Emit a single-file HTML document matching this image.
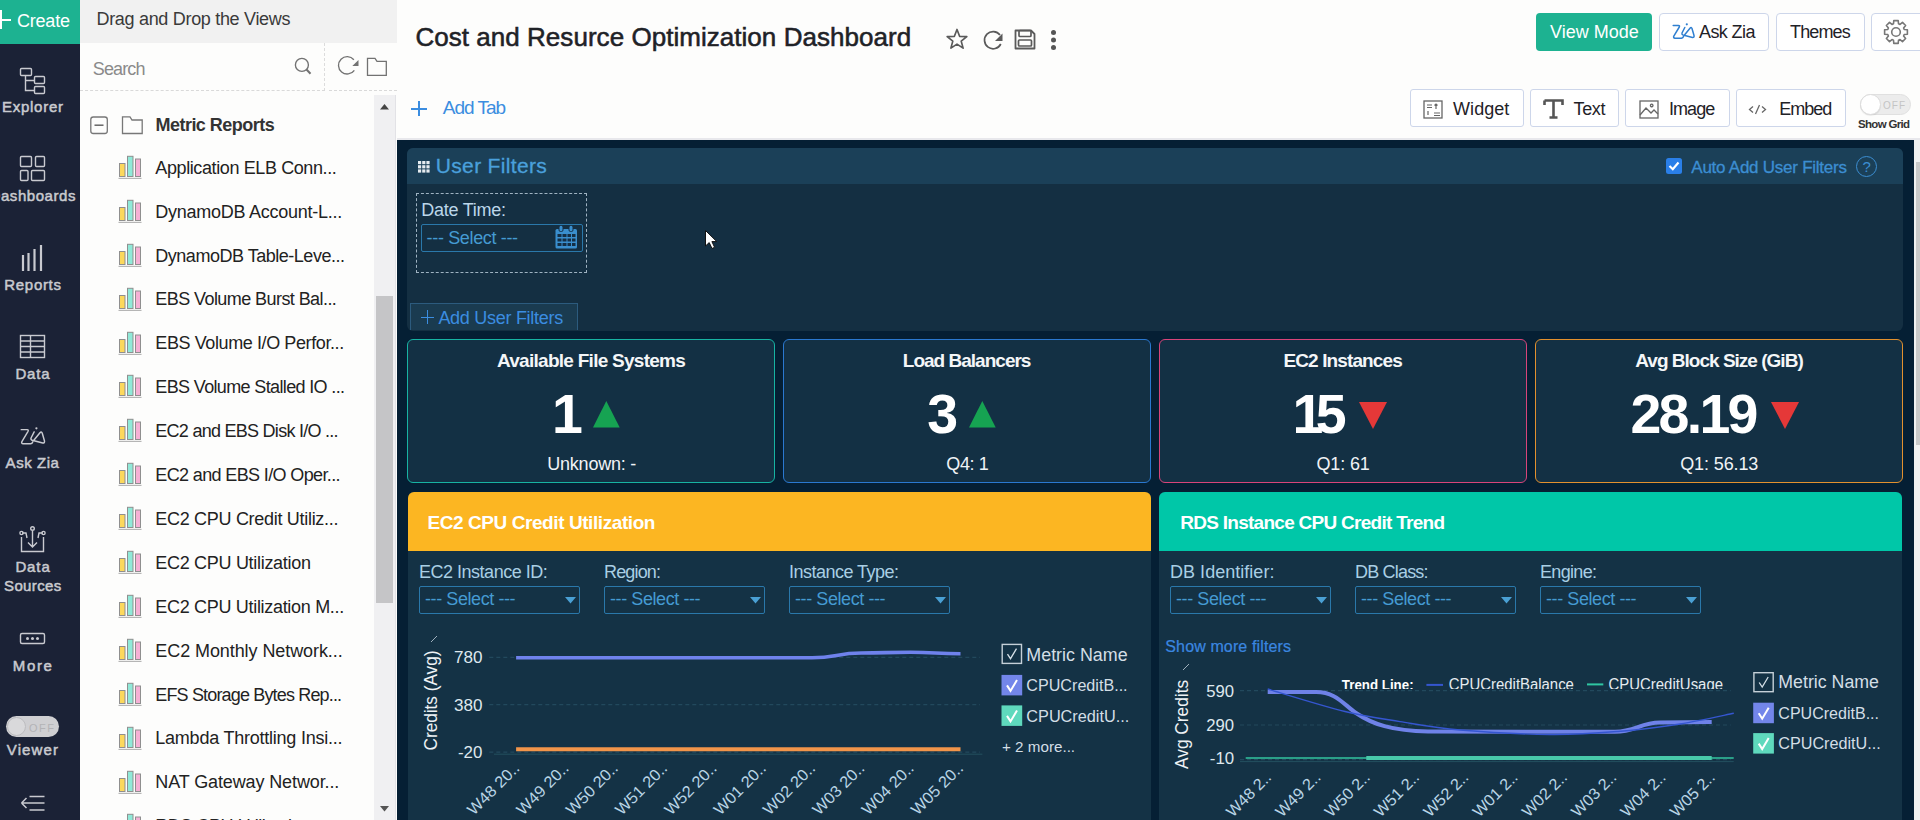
<!DOCTYPE html>
<html><head><meta charset="utf-8"><title>Dashboard</title>
<style>
*{box-sizing:border-box;margin:0;padding:0}
html,body{width:1920px;height:820px;overflow:hidden;background:#fdfdfc;font-family:"Liberation Sans",sans-serif;position:relative}
.a{position:absolute}
.t{white-space:pre}
svg{overflow:visible}
</style></head><body>
<div class="a" style="left:0;top:0;width:80px;height:820px;background:#1b2236"></div>
<div class="a" style="left:0;top:0;width:80px;height:44px;background:#1db291"></div>
<div class="a" style="left:0;top:10px;width:2px;height:19px;background:#fff"></div>
<div class="a" style="left:-4px;top:19px;width:15px;height:2px;background:#fff"></div>
<svg class="a" style="left:0;top:0" width="80" height="820" fill="none" stroke="#c9cad0" stroke-width="1.4">
<rect x="20.5" y="68.5" width="11" height="7" rx="1"/>
<rect x="34.5" y="76.5" width="10" height="7" rx="1"/>
<rect x="34.5" y="86.5" width="10" height="7" rx="1"/>
<path d="M25.5 75.5V90.5H34.5M25.5 80.5H34.5"/>
<rect x="20.5" y="156.5" width="11" height="10" rx="1"/>
<rect x="35.5" y="156.5" width="9" height="10" rx="1"/>
<rect x="20.5" y="170.5" width="7.5" height="10" rx="1"/>
<rect x="31.5" y="170.5" width="13" height="10" rx="1"/>
<path d="M23 271V255M28.5 271V253M34.5 271V249M41 271V245" stroke-width="2.2"/>
<rect x="20.5" y="335.5" width="24" height="22"/>
<path d="M20.5 341H44.5M20.5 346.5H44.5M20.5 352H44.5M30.5 335.5V357.5"/>
<g transform="translate(17.65 423.5) scale(1.116)"><path d="M3.2 5.5H8.5Q10 5.5 9.3 7L3.8 16.2Q3 17.8 5 18.2H11.5Q13 18 13.5 16.5M14.8 7.5L12 13Q11.5 14.5 13 15L22.5 17.5Q24.5 17.5 24 15.5L22 8.5Q21.2 6.8 20 8.3L14.5 15" stroke-linecap="round" stroke-linejoin="round" stroke-width="1.3"/><circle cx="16.8" cy="4.3" r="1" fill="#c9cad0" stroke="none"/></g>
<path d="M21.5 537V551.5H43.5V537M32.5 531V547M28 542.5L32.5 547L37 542.5M22 533H26L27 538M43 533H39L38 538"/>
<circle cx="32.5" cy="528.5" r="1.8"/><circle cx="21.5" cy="533" r="1.6"/><circle cx="43.5" cy="533" r="1.6"/>
<rect x="20.5" y="633.5" width="24" height="10" rx="1.5"/>
<path d="M21.5 803H44.5M29.5 796.5H44.5M29.5 810H44.5M21.5 803L26.5 798M21.5 803L26.5 808" stroke-width="1.5"/>
</svg>
<div class="a" style="left:26px;top:637px;width:3px;height:3px;background:#c9cad0;border-radius:50%;box-shadow:5px 0 0 #c9cad0,10px 0 0 #c9cad0"></div>
<div class="a" style="left:6px;top:716px;width:53px;height:21px;border-radius:11px;background:#cfcfd2"></div>
<div class="a" style="left:7px;top:717px;width:19px;height:19px;border-radius:50%;background:#d9d9db;border:1px solid #bdbdc0"></div>
<div class="a" style="left:80px;top:0;width:317px;height:820px;background:#fdfdfc"></div>
<div class="a" style="left:80px;top:0;width:317px;height:43px;background:#f1f1f1"></div>
<div class="a" style="left:324px;top:43px;width:0;height:48px;border-left:1px dashed #dcdcdc"></div>
<div class="a" style="left:80px;top:90px;width:245px;height:0;border-top:1px dashed #d9d9d9"></div>
<div class="a" style="left:329px;top:90px;width:68px;height:0;border-top:1px dashed #d9d9d9"></div>
<svg class="a" style="left:80px;top:0" width="317" height="820" fill="none" stroke="#727272" stroke-width="1.35">
<circle cx="221.9" cy="64.9" r="6.5"/><path d="M226.5 69.5L230.5 73.8" stroke-width="2"/>
<path d="M273.86 59.71A8.7 8.7 0 1 0 274.33 70.29"/><path d="M278.5 60L278.5 66L272.3 66Z" fill="#727272" stroke="none"/>
<path d="M287.5 75.3V58.3H295L297 61.3H306.3V75.3Z" stroke-width="1.3"/>
<rect x="10.8" y="117" width="16.5" height="16.5" rx="2.5" stroke="#777" stroke-width="1.3"/>
<path d="M14.5 125.2H23.5" stroke="#666" stroke-width="1.5"/>
<path d="M42.5 133.5V116.8H50L52 120H62.2V133.5Z" stroke="#777" stroke-width="1.3"/>
</svg>
<svg class="a" style="left:117px;top:153.9px" width="26" height="26">
<rect x="2.5" y="9.5" width="5.5" height="13" fill="#fcd85c" stroke="#8f8f8f" stroke-width="1"/>
<rect x="10.5" y="2.3" width="5.5" height="20.2" fill="#90e9d8" stroke="#8f8f8f" stroke-width="1"/>
<rect x="18.5" y="5" width="5" height="17.5" fill="#f6b0d5" stroke="#8f8f8f" stroke-width="1"/>
<path d="M1.5 24.4H24.5" stroke="#b5b5b5" stroke-width="1.2"/></svg>
<svg class="a" style="left:117px;top:197.8px" width="26" height="26">
<rect x="2.5" y="9.5" width="5.5" height="13" fill="#fcd85c" stroke="#8f8f8f" stroke-width="1"/>
<rect x="10.5" y="2.3" width="5.5" height="20.2" fill="#90e9d8" stroke="#8f8f8f" stroke-width="1"/>
<rect x="18.5" y="5" width="5" height="17.5" fill="#f6b0d5" stroke="#8f8f8f" stroke-width="1"/>
<path d="M1.5 24.4H24.5" stroke="#b5b5b5" stroke-width="1.2"/></svg>
<svg class="a" style="left:117px;top:241.7px" width="26" height="26">
<rect x="2.5" y="9.5" width="5.5" height="13" fill="#fcd85c" stroke="#8f8f8f" stroke-width="1"/>
<rect x="10.5" y="2.3" width="5.5" height="20.2" fill="#90e9d8" stroke="#8f8f8f" stroke-width="1"/>
<rect x="18.5" y="5" width="5" height="17.5" fill="#f6b0d5" stroke="#8f8f8f" stroke-width="1"/>
<path d="M1.5 24.4H24.5" stroke="#b5b5b5" stroke-width="1.2"/></svg>
<svg class="a" style="left:117px;top:285.6px" width="26" height="26">
<rect x="2.5" y="9.5" width="5.5" height="13" fill="#fcd85c" stroke="#8f8f8f" stroke-width="1"/>
<rect x="10.5" y="2.3" width="5.5" height="20.2" fill="#90e9d8" stroke="#8f8f8f" stroke-width="1"/>
<rect x="18.5" y="5" width="5" height="17.5" fill="#f6b0d5" stroke="#8f8f8f" stroke-width="1"/>
<path d="M1.5 24.4H24.5" stroke="#b5b5b5" stroke-width="1.2"/></svg>
<svg class="a" style="left:117px;top:329.5px" width="26" height="26">
<rect x="2.5" y="9.5" width="5.5" height="13" fill="#fcd85c" stroke="#8f8f8f" stroke-width="1"/>
<rect x="10.5" y="2.3" width="5.5" height="20.2" fill="#90e9d8" stroke="#8f8f8f" stroke-width="1"/>
<rect x="18.5" y="5" width="5" height="17.5" fill="#f6b0d5" stroke="#8f8f8f" stroke-width="1"/>
<path d="M1.5 24.4H24.5" stroke="#b5b5b5" stroke-width="1.2"/></svg>
<svg class="a" style="left:117px;top:373.4px" width="26" height="26">
<rect x="2.5" y="9.5" width="5.5" height="13" fill="#fcd85c" stroke="#8f8f8f" stroke-width="1"/>
<rect x="10.5" y="2.3" width="5.5" height="20.2" fill="#90e9d8" stroke="#8f8f8f" stroke-width="1"/>
<rect x="18.5" y="5" width="5" height="17.5" fill="#f6b0d5" stroke="#8f8f8f" stroke-width="1"/>
<path d="M1.5 24.4H24.5" stroke="#b5b5b5" stroke-width="1.2"/></svg>
<svg class="a" style="left:117px;top:417.3px" width="26" height="26">
<rect x="2.5" y="9.5" width="5.5" height="13" fill="#fcd85c" stroke="#8f8f8f" stroke-width="1"/>
<rect x="10.5" y="2.3" width="5.5" height="20.2" fill="#90e9d8" stroke="#8f8f8f" stroke-width="1"/>
<rect x="18.5" y="5" width="5" height="17.5" fill="#f6b0d5" stroke="#8f8f8f" stroke-width="1"/>
<path d="M1.5 24.4H24.5" stroke="#b5b5b5" stroke-width="1.2"/></svg>
<svg class="a" style="left:117px;top:461.2px" width="26" height="26">
<rect x="2.5" y="9.5" width="5.5" height="13" fill="#fcd85c" stroke="#8f8f8f" stroke-width="1"/>
<rect x="10.5" y="2.3" width="5.5" height="20.2" fill="#90e9d8" stroke="#8f8f8f" stroke-width="1"/>
<rect x="18.5" y="5" width="5" height="17.5" fill="#f6b0d5" stroke="#8f8f8f" stroke-width="1"/>
<path d="M1.5 24.4H24.5" stroke="#b5b5b5" stroke-width="1.2"/></svg>
<svg class="a" style="left:117px;top:505.1px" width="26" height="26">
<rect x="2.5" y="9.5" width="5.5" height="13" fill="#fcd85c" stroke="#8f8f8f" stroke-width="1"/>
<rect x="10.5" y="2.3" width="5.5" height="20.2" fill="#90e9d8" stroke="#8f8f8f" stroke-width="1"/>
<rect x="18.5" y="5" width="5" height="17.5" fill="#f6b0d5" stroke="#8f8f8f" stroke-width="1"/>
<path d="M1.5 24.4H24.5" stroke="#b5b5b5" stroke-width="1.2"/></svg>
<svg class="a" style="left:117px;top:549.0px" width="26" height="26">
<rect x="2.5" y="9.5" width="5.5" height="13" fill="#fcd85c" stroke="#8f8f8f" stroke-width="1"/>
<rect x="10.5" y="2.3" width="5.5" height="20.2" fill="#90e9d8" stroke="#8f8f8f" stroke-width="1"/>
<rect x="18.5" y="5" width="5" height="17.5" fill="#f6b0d5" stroke="#8f8f8f" stroke-width="1"/>
<path d="M1.5 24.4H24.5" stroke="#b5b5b5" stroke-width="1.2"/></svg>
<svg class="a" style="left:117px;top:592.9px" width="26" height="26">
<rect x="2.5" y="9.5" width="5.5" height="13" fill="#fcd85c" stroke="#8f8f8f" stroke-width="1"/>
<rect x="10.5" y="2.3" width="5.5" height="20.2" fill="#90e9d8" stroke="#8f8f8f" stroke-width="1"/>
<rect x="18.5" y="5" width="5" height="17.5" fill="#f6b0d5" stroke="#8f8f8f" stroke-width="1"/>
<path d="M1.5 24.4H24.5" stroke="#b5b5b5" stroke-width="1.2"/></svg>
<svg class="a" style="left:117px;top:636.8px" width="26" height="26">
<rect x="2.5" y="9.5" width="5.5" height="13" fill="#fcd85c" stroke="#8f8f8f" stroke-width="1"/>
<rect x="10.5" y="2.3" width="5.5" height="20.2" fill="#90e9d8" stroke="#8f8f8f" stroke-width="1"/>
<rect x="18.5" y="5" width="5" height="17.5" fill="#f6b0d5" stroke="#8f8f8f" stroke-width="1"/>
<path d="M1.5 24.4H24.5" stroke="#b5b5b5" stroke-width="1.2"/></svg>
<svg class="a" style="left:117px;top:680.7px" width="26" height="26">
<rect x="2.5" y="9.5" width="5.5" height="13" fill="#fcd85c" stroke="#8f8f8f" stroke-width="1"/>
<rect x="10.5" y="2.3" width="5.5" height="20.2" fill="#90e9d8" stroke="#8f8f8f" stroke-width="1"/>
<rect x="18.5" y="5" width="5" height="17.5" fill="#f6b0d5" stroke="#8f8f8f" stroke-width="1"/>
<path d="M1.5 24.4H24.5" stroke="#b5b5b5" stroke-width="1.2"/></svg>
<svg class="a" style="left:117px;top:724.6px" width="26" height="26">
<rect x="2.5" y="9.5" width="5.5" height="13" fill="#fcd85c" stroke="#8f8f8f" stroke-width="1"/>
<rect x="10.5" y="2.3" width="5.5" height="20.2" fill="#90e9d8" stroke="#8f8f8f" stroke-width="1"/>
<rect x="18.5" y="5" width="5" height="17.5" fill="#f6b0d5" stroke="#8f8f8f" stroke-width="1"/>
<path d="M1.5 24.4H24.5" stroke="#b5b5b5" stroke-width="1.2"/></svg>
<svg class="a" style="left:117px;top:768.5px" width="26" height="26">
<rect x="2.5" y="9.5" width="5.5" height="13" fill="#fcd85c" stroke="#8f8f8f" stroke-width="1"/>
<rect x="10.5" y="2.3" width="5.5" height="20.2" fill="#90e9d8" stroke="#8f8f8f" stroke-width="1"/>
<rect x="18.5" y="5" width="5" height="17.5" fill="#f6b0d5" stroke="#8f8f8f" stroke-width="1"/>
<path d="M1.5 24.4H24.5" stroke="#b5b5b5" stroke-width="1.2"/></svg>
<svg class="a" style="left:117px;top:812.4px" width="26" height="26">
<rect x="2.5" y="9.5" width="5.5" height="13" fill="#fcd85c" stroke="#8f8f8f" stroke-width="1"/>
<rect x="10.5" y="2.3" width="5.5" height="20.2" fill="#90e9d8" stroke="#8f8f8f" stroke-width="1"/>
<rect x="18.5" y="5" width="5" height="17.5" fill="#f6b0d5" stroke="#8f8f8f" stroke-width="1"/>
<path d="M1.5 24.4H24.5" stroke="#b5b5b5" stroke-width="1.2"/></svg>
<div class="a" style="left:374px;top:95px;width:22px;height:725px;background:#f0f0f2;border-right:1px solid #e2e2e6"></div>
<div class="a" style="left:376px;top:296px;width:17px;height:307px;background:#c5c5c7"></div>
<svg class="a" style="left:374px;top:95px" width="22" height="725"><path d="M6 14.5L10.5 9L15 14.5Z" fill="#444"/><path d="M6 711L10.5 716.5L15 711Z" fill="#555"/></svg>
<div class="a" style="left:397px;top:0;width:1523px;height:140px;background:#fdfdfc"></div>
<div class="a" style="left:397px;top:138px;width:1523px;height:2px;background:#e8e8ec"></div>
<svg class="a" style="left:940px;top:24px" width="120" height="30" fill="none" stroke="#5a5a5a" stroke-width="1.7" stroke-linejoin="round">
<path d="M17 5.5L19.6 12.3L26.8 12.6L21.2 17.1L23.1 24.1L17 20.1L10.9 24.1L12.8 17.1L7.2 12.6L14.4 12.3Z"/>
<path d="M60 11A8.6 8.6 0 1 0 60.8 20"/><path d="M62.5 9.5V17H55Z" fill="#5a5a5a" stroke="none"/>
<path d="M75.5 6.5H91L94.5 10V24.5H75.5Z" stroke-width="1.8"/>
<rect x="79" y="6.5" width="12" height="6" rx="1"/><rect x="78.5" y="16" width="13" height="6" rx="1"/>
</svg>
<div class="a" style="left:1051px;top:29.5px;width:5px;height:5px;border-radius:50%;background:#555;box-shadow:0 7.5px 0 #555,0 15px 0 #555"></div>
<div class="a" style="left:1536px;top:13px;width:116px;height:38px;border-radius:4px;background:#1db291"></div>
<div class="a" style="left:1659px;top:13px;width:110px;height:38px;border-radius:4px;border:1px solid #cdd6ea;background:#fff"></div>
<div class="a" style="left:1776px;top:13px;width:89px;height:38px;border-radius:4px;border:1px solid #cdd6ea;background:#fff"></div>
<div class="a" style="left:1871px;top:13px;width:64px;height:38px;border-radius:4px;border:1px solid #cdd6ea;background:#fff"></div>
<svg class="a" style="left:1670px;top:20px" width="28" height="22" fill="none" stroke="#2f7fd0" stroke-width="1.5" stroke-linejoin="round">
<path d="M3.2 5.5H8.5Q10 5.5 9.3 7L3.8 16.2Q3 17.8 5 18.2H11.5Q13 18 13.5 16.5M14.8 7.5L12 13Q11.5 14.5 13 15L22.5 17.5Q24.5 17.5 24 15.5L22 8.5Q21.2 6.8 20 8.3L14.5 15" stroke-linecap="round"/><circle cx="16.8" cy="4.3" r="1.1" fill="#2f7fd0" stroke="none"/></svg>
<svg class="a" style="left:1882.3px;top:17.7px" width="28" height="28" fill="none" stroke="#777" stroke-width="1.6" stroke-linejoin="round">
<path d="M22.22 11.49 L25.39 11.79 L25.39 16.21 L22.22 16.51 L21.59 18.04 L23.62 20.49 L20.49 23.62 L18.04 21.59 L16.51 22.22 L16.21 25.39 L11.79 25.39 L11.49 22.22 L9.96 21.59 L7.51 23.62 L4.38 20.49 L6.41 18.04 L5.78 16.51 L2.61 16.21 L2.61 11.79 L5.78 11.49 L6.41 9.96 L4.38 7.51 L7.51 4.38 L9.96 6.41 L11.49 5.78 L11.79 2.61 L16.21 2.61 L16.51 5.78 L18.04 6.41 L20.49 4.38 L23.62 7.51 L21.59 9.96Z"/>
<circle cx="14" cy="14" r="4.3"/></svg>
<div class="a" style="left:417.5px;top:101px;width:2px;height:15px;background:#3b8de0"></div>
<div class="a" style="left:410.5px;top:107.5px;width:16px;height:2px;background:#3b8de0"></div>
<div class="a" style="left:1410px;top:89px;width:114px;height:38px;border-radius:3px;border:1px solid #cdd6ea;background:#fff"></div>
<div class="a" style="left:1530px;top:89px;width:89px;height:38px;border-radius:3px;border:1px solid #cdd6ea;background:#fff"></div>
<div class="a" style="left:1625px;top:89px;width:105px;height:38px;border-radius:3px;border:1px solid #cdd6ea;background:#fff"></div>
<div class="a" style="left:1736px;top:89px;width:110px;height:38px;border-radius:3px;border:1px solid #cdd6ea;background:#fff"></div>
<svg class="a" style="left:1420px;top:96px" width="440" height="26" fill="none" stroke="#666" stroke-width="1.3">
<rect x="4" y="5" width="18" height="17"/><path d="M7 9H12M7 11.5H12M16 8V13M14.5 9.5L16 8L17.5 9.5M8 15V19M14 17H20M14 19.5H20" stroke-width="1.2"/>
<path d="M124.5 4.5H142.5V9M133.5 4.5V21.5M129.5 21.5H137.5M124.5 4.5V9" stroke-width="2.6" stroke="#555"/>
<rect x="220" y="5" width="18" height="17"/><path d="M220 19L226 12L231 17L234 14L238 18M233 9.5A1.3 1.3 0 1 1 233 9.4" stroke-width="1.3"/>
<path d="M333 10.5L329.5 13.5L333 16.5M342 10.5L345.5 13.5L342 16.5M339.5 9L335.5 18" stroke-width="1.3"/>
</svg>
<div class="a" style="left:1859.5px;top:94px;width:51px;height:21px;border-radius:11px;background:#ececec;border:1px solid #e0e0e0"></div>
<div class="a" style="left:1859.5px;top:94px;width:21px;height:21px;border-radius:50%;background:#fff;border:1px solid #dcdcdc;box-shadow:0 1px 1px rgba(0,0,0,.08)"></div>
<div class="a" style="left:397px;top:140px;width:1517px;height:680px;background:#051f34"></div>
<div class="a" style="left:1914px;top:140px;width:6px;height:680px;background:#f1f1f1"></div>
<div class="a" style="left:1915.5px;top:161.5px;width:4.5px;height:283px;background:#c9c9c9"></div>
<div class="a" style="left:407px;top:148px;width:1496px;height:183px;border-radius:6px;background:#142f42;overflow:hidden"><div style="height:35.5px;background:#1b4058"></div></div>
<svg class="a" style="left:418px;top:161.3px" width="12" height="12" fill="#e6ecf0"><rect x="0" y="0" width="3.2" height="3.2"/><rect x="4.2" y="0" width="3.2" height="3.2"/><rect x="8.4" y="0" width="3.2" height="3.2"/><rect x="0" y="4.2" width="3.2" height="3.2"/><rect x="4.2" y="4.2" width="3.2" height="3.2"/><rect x="8.4" y="4.2" width="3.2" height="3.2"/><rect x="0" y="8.4" width="3.2" height="3.2"/><rect x="4.2" y="8.4" width="3.2" height="3.2"/><rect x="8.4" y="8.4" width="3.2" height="3.2"/></svg>
<div class="a" style="left:1666px;top:158px;width:15.5px;height:15.5px;border-radius:2.5px;background:#2a7fe8"></div>
<svg class="a" style="left:1666px;top:158px" width="16" height="16" fill="none" stroke="#fff" stroke-width="2.2"><path d="M3.5 8L6.8 11.2L12.5 4.5"/></svg>
<div class="a" style="left:1856px;top:156px;width:21px;height:21px;border-radius:50%;border:1.3px solid #3c8ed2"></div>
<div class="a" style="left:416px;top:193px;width:171px;height:80px;border:1px dashed #9fb3c2"></div>
<div class="a" style="left:421px;top:223.5px;width:161.5px;height:28.5px;border:1px solid #2a78aa;border-radius:2px"></div>
<svg class="a" style="left:555px;top:225px" width="23" height="24" fill="#3a8fce">
<rect x="0.5" y="4" width="21.5" height="19.5" rx="1.5"/>
<rect x="4" y="0.5" width="4" height="6" rx="1.5" fill="#3a8fce" stroke="#142f45" stroke-width="1"/>
<rect x="14" y="0.5" width="4" height="6" rx="1.5" fill="#3a8fce" stroke="#142f45" stroke-width="1"/>
<g fill="#142f45"><rect x="2.5" y="9" width="4" height="3"/><rect x="7.5" y="9" width="4" height="3"/><rect x="12.5" y="9" width="3.5" height="3"/><rect x="17" y="9" width="3.5" height="3"/>
<rect x="2.5" y="13.5" width="4" height="3"/><rect x="7.5" y="13.5" width="4" height="3"/><rect x="12.5" y="13.5" width="3.5" height="3"/><rect x="17" y="13.5" width="3.5" height="3"/>
<rect x="2.5" y="18" width="4" height="3"/><rect x="7.5" y="18" width="4" height="3"/><rect x="12.5" y="18" width="3.5" height="3"/><rect x="17" y="18" width="3.5" height="3"/></g></svg>
<svg class="a" style="left:704px;top:229px" width="16" height="22"><path d="M1.5 1.5V17L5.2 13.6L8 19.5L10.6 18.3L7.9 12.6H12.8Z" fill="#fff" stroke="#111" stroke-width="1"/></svg>
<div class="a" style="left:410px;top:303px;width:168px;height:27px;background:#1a3b50;border:1px solid #2c5b7e;border-bottom:none"></div>
<div class="a" style="left:426.5px;top:310px;width:1.5px;height:14px;background:#3b8de0"></div>
<div class="a" style="left:420.5px;top:316.5px;width:13.5px;height:1.5px;background:#3b8de0"></div>
<div class="a" style="left:407px;top:339px;width:368px;height:144px;border-radius:6px;border:1.2px solid #17b3a3;background:#133044"></div>
<svg class="a" style="left:593.2px;top:401px" width="28" height="27"><path d="M0 26.5L13.3 0L26.7 26.5Z" fill="#16a352"/></svg>
<div class="a" style="left:783px;top:339px;width:368px;height:144px;border-radius:6px;border:1.2px solid #2a78d0;background:#133044"></div>
<svg class="a" style="left:969.3px;top:401px" width="28" height="27"><path d="M0 26.5L13.3 0L26.7 26.5Z" fill="#16a352"/></svg>
<div class="a" style="left:1159px;top:339px;width:368px;height:144px;border-radius:6px;border:1.2px solid #d8447a;background:#133044"></div>
<svg class="a" style="left:1359.3px;top:401.5px" width="29" height="27"><path d="M0 0H28L14 27Z" fill="#e53838"/></svg>
<div class="a" style="left:1535px;top:339px;width:368px;height:144px;border-radius:6px;border:1.2px solid #e2902e;background:#133044"></div>
<svg class="a" style="left:1770.8px;top:401.5px" width="29" height="27"><path d="M0 0H28L14 27Z" fill="#e53838"/></svg>
<div class="a" style="left:408px;top:492px;width:743px;height:340px;border-radius:6px;background:#143245;overflow:hidden"><div style="height:59px;background:#fcb622"></div></div>
<div class="a" style="left:1159px;top:492px;width:743px;height:340px;border-radius:6px;background:#143245;overflow:hidden"><div style="height:59px;background:#00c7a8"></div></div>
<div class="a" style="left:419px;top:586px;width:161px;height:28px;border:1px solid #2a78aa;border-radius:2px"></div>
<svg class="a" style="left:565px;top:597px" width="12" height="7"><path d="M0 0H11L5.5 6.5Z" fill="#4aa0d4"/></svg>
<div class="a" style="left:604px;top:586px;width:161px;height:28px;border:1px solid #2a78aa;border-radius:2px"></div>
<svg class="a" style="left:750px;top:597px" width="12" height="7"><path d="M0 0H11L5.5 6.5Z" fill="#4aa0d4"/></svg>
<div class="a" style="left:789px;top:586px;width:161px;height:28px;border:1px solid #2a78aa;border-radius:2px"></div>
<svg class="a" style="left:935px;top:597px" width="12" height="7"><path d="M0 0H11L5.5 6.5Z" fill="#4aa0d4"/></svg>
<div class="a" style="left:1170px;top:586px;width:161px;height:28px;border:1px solid #2a78aa;border-radius:2px"></div>
<svg class="a" style="left:1316px;top:597px" width="12" height="7"><path d="M0 0H11L5.5 6.5Z" fill="#4aa0d4"/></svg>
<div class="a" style="left:1355px;top:586px;width:161px;height:28px;border:1px solid #2a78aa;border-radius:2px"></div>
<svg class="a" style="left:1501px;top:597px" width="12" height="7"><path d="M0 0H11L5.5 6.5Z" fill="#4aa0d4"/></svg>
<div class="a" style="left:1540px;top:586px;width:161px;height:28px;border:1px solid #2a78aa;border-radius:2px"></div>
<svg class="a" style="left:1686px;top:597px" width="12" height="7"><path d="M0 0H11L5.5 6.5Z" fill="#4aa0d4"/></svg>
<svg class="a" style="left:0;top:0" width="1920" height="820" font-family="Liberation Sans, sans-serif">
<path d="M489.3 657.3H980" stroke="#22495d" stroke-width="1.2" stroke-dasharray="4 3"/>
<path d="M489.3 704.6H980" stroke="#22495d" stroke-width="1.2" stroke-dasharray="4 3"/>
<path d="M489.3 752.2H980" stroke="#22495d" stroke-width="1.2" stroke-dasharray="4 3"/>
<path d="M494 754.2H982.4" stroke="#24505f" stroke-width="1"/>
<path d="M516.1 657.8L812 657.8C836 657.8 837 653 861.2 653C885 653 886 652.3 910.5 652.3C935 652.3 936 653.7 960.5 653.7" fill="none" stroke="#6f82ec" stroke-width="3.6"/>
<path d="M516.1 749.3H960.5" stroke="#f2954a" stroke-width="4"/>
<text x="482.4" y="663.4" font-size="16" font-weight="normal" fill="#dfe8ee" text-anchor="end" textLength="28.5" lengthAdjust="spacingAndGlyphs">780</text>
<text x="482.4" y="710.7" font-size="16" font-weight="normal" fill="#dfe8ee" text-anchor="end" textLength="28.5" lengthAdjust="spacingAndGlyphs">380</text>
<text x="482.4" y="757.8" font-size="16" font-weight="normal" fill="#dfe8ee" text-anchor="end" textLength="24.4" lengthAdjust="spacingAndGlyphs">-20</text>
<text x="436.6" y="750.5" font-size="18" font-weight="normal" fill="#eef2f5" text-anchor="start" textLength="100" lengthAdjust="spacingAndGlyphs" transform="rotate(-90 436.6 750.5)">Credits (Avg)</text>
<path d="M431 642L437 636" stroke="#9fb0bd" stroke-width="1"/>
<text x="473.8" y="816.0" font-size="16" font-weight="normal" fill="#b9d5e6" text-anchor="start" textLength="66" lengthAdjust="spacingAndGlyphs" transform="rotate(-45 473.8 816.0)">W48 20..</text>
<text x="523.1" y="816.0" font-size="16" font-weight="normal" fill="#b9d5e6" text-anchor="start" textLength="66" lengthAdjust="spacingAndGlyphs" transform="rotate(-45 523.1 816.0)">W49 20..</text>
<text x="572.4" y="816.0" font-size="16" font-weight="normal" fill="#b9d5e6" text-anchor="start" textLength="66" lengthAdjust="spacingAndGlyphs" transform="rotate(-45 572.4 816.0)">W50 20..</text>
<text x="621.7" y="816.0" font-size="16" font-weight="normal" fill="#b9d5e6" text-anchor="start" textLength="66" lengthAdjust="spacingAndGlyphs" transform="rotate(-45 621.7 816.0)">W51 20..</text>
<text x="671.0" y="816.0" font-size="16" font-weight="normal" fill="#b9d5e6" text-anchor="start" textLength="66" lengthAdjust="spacingAndGlyphs" transform="rotate(-45 671.0 816.0)">W52 20..</text>
<text x="720.3" y="816.0" font-size="16" font-weight="normal" fill="#b9d5e6" text-anchor="start" textLength="66" lengthAdjust="spacingAndGlyphs" transform="rotate(-45 720.3 816.0)">W01 20..</text>
<text x="769.6" y="816.0" font-size="16" font-weight="normal" fill="#b9d5e6" text-anchor="start" textLength="66" lengthAdjust="spacingAndGlyphs" transform="rotate(-45 769.6 816.0)">W02 20..</text>
<text x="818.9" y="816.0" font-size="16" font-weight="normal" fill="#b9d5e6" text-anchor="start" textLength="66" lengthAdjust="spacingAndGlyphs" transform="rotate(-45 818.9 816.0)">W03 20..</text>
<text x="868.2" y="816.0" font-size="16" font-weight="normal" fill="#b9d5e6" text-anchor="start" textLength="66" lengthAdjust="spacingAndGlyphs" transform="rotate(-45 868.2 816.0)">W04 20..</text>
<text x="917.5" y="816.0" font-size="16" font-weight="normal" fill="#b9d5e6" text-anchor="start" textLength="66" lengthAdjust="spacingAndGlyphs" transform="rotate(-45 917.5 816.0)">W05 20..</text>
<path d="M1240 690.7H1730.7" stroke="#22495d" stroke-width="1.2" stroke-dasharray="4 3"/>
<path d="M1240 725H1730.7" stroke="#22495d" stroke-width="1.2" stroke-dasharray="4 3"/>
<path d="M1240 759.7H1730.7" stroke="#22495d" stroke-width="1.2" stroke-dasharray="4 3"/>
<path d="M1240 761.6H1733.7" stroke="#24505f" stroke-width="1"/>
<path d="M1245.7 757.9H1733.7" stroke="#2a9f88" stroke-width="2"/>
<path d="M1366.3 758.1H1711.7" stroke="#48c9a9" stroke-width="4"/>
<path d="M1267.7 692L1316 692C1336 692 1343 704 1356 713C1372 724 1392 731 1428 731.5L1615 731.8C1635 731.8 1640 723 1660 722.6L1711.7 722" fill="none" stroke="#6f82e8" stroke-width="4"/>
<path d="M1267.7 689.0C1280.6 692.8 1323.0 706.1 1345.0 711.5C1367.0 716.9 1380.8 718.5 1400.0 721.6C1419.2 724.7 1435.0 727.9 1460.0 730.0C1485.0 732.1 1523.7 734.2 1550.0 734.5C1576.3 734.8 1596.3 733.2 1618.0 731.5C1639.7 729.8 1660.7 727.0 1680.0 724.0C1699.3 721.0 1724.8 715.1 1733.8 713.3" fill="none" stroke="#3556d0" stroke-width="1.4"/>
<text x="1234.1" y="696.7" font-size="16" font-weight="normal" fill="#dfe8ee" text-anchor="end" textLength="27.8" lengthAdjust="spacingAndGlyphs">590</text>
<text x="1234.1" y="730.8" font-size="16" font-weight="normal" fill="#dfe8ee" text-anchor="end" textLength="27.8" lengthAdjust="spacingAndGlyphs">290</text>
<text x="1234.1" y="764.4" font-size="16" font-weight="normal" fill="#dfe8ee" text-anchor="end" textLength="24.3" lengthAdjust="spacingAndGlyphs">-10</text>
<text x="1188" y="769" font-size="18" font-weight="normal" fill="#eef2f5" text-anchor="start" textLength="89.2" lengthAdjust="spacingAndGlyphs" transform="rotate(-90 1188 769)">Avg Credits</text>
<path d="M1183 670L1189 664" stroke="#9fb0bd" stroke-width="1"/>
<text x="1232.7" y="818.0" font-size="16" font-weight="normal" fill="#b9d5e6" text-anchor="start" textLength="56" lengthAdjust="spacingAndGlyphs" transform="rotate(-45 1232.7 818.0)">W48 2..</text>
<text x="1282.0" y="818.0" font-size="16" font-weight="normal" fill="#b9d5e6" text-anchor="start" textLength="56" lengthAdjust="spacingAndGlyphs" transform="rotate(-45 1282.0 818.0)">W49 2..</text>
<text x="1331.3" y="818.0" font-size="16" font-weight="normal" fill="#b9d5e6" text-anchor="start" textLength="56" lengthAdjust="spacingAndGlyphs" transform="rotate(-45 1331.3 818.0)">W50 2..</text>
<text x="1380.6" y="818.0" font-size="16" font-weight="normal" fill="#b9d5e6" text-anchor="start" textLength="56" lengthAdjust="spacingAndGlyphs" transform="rotate(-45 1380.6 818.0)">W51 2..</text>
<text x="1429.9" y="818.0" font-size="16" font-weight="normal" fill="#b9d5e6" text-anchor="start" textLength="56" lengthAdjust="spacingAndGlyphs" transform="rotate(-45 1429.9 818.0)">W52 2..</text>
<text x="1479.2" y="818.0" font-size="16" font-weight="normal" fill="#b9d5e6" text-anchor="start" textLength="56" lengthAdjust="spacingAndGlyphs" transform="rotate(-45 1479.2 818.0)">W01 2..</text>
<text x="1528.5" y="818.0" font-size="16" font-weight="normal" fill="#b9d5e6" text-anchor="start" textLength="56" lengthAdjust="spacingAndGlyphs" transform="rotate(-45 1528.5 818.0)">W02 2..</text>
<text x="1577.8" y="818.0" font-size="16" font-weight="normal" fill="#b9d5e6" text-anchor="start" textLength="56" lengthAdjust="spacingAndGlyphs" transform="rotate(-45 1577.8 818.0)">W03 2..</text>
<text x="1627.1" y="818.0" font-size="16" font-weight="normal" fill="#b9d5e6" text-anchor="start" textLength="56" lengthAdjust="spacingAndGlyphs" transform="rotate(-45 1627.1 818.0)">W04 2..</text>
<text x="1676.4" y="818.0" font-size="16" font-weight="normal" fill="#b9d5e6" text-anchor="start" textLength="56" lengthAdjust="spacingAndGlyphs" transform="rotate(-45 1676.4 818.0)">W05 2..</text>
<defs><clipPath id="tl"><rect x="1330" y="660" width="420" height="29"/></clipPath></defs>
<g clip-path="url(#tl)">
<text x="1341.8" y="690" font-size="15" font-weight="bold" fill="#ffffff" text-anchor="start" textLength="71.8" lengthAdjust="spacingAndGlyphs">Trend Line:</text>
<path d="M1426.4 684.9H1443" stroke="#3556d0" stroke-width="2"/>
<text x="1448.8" y="690" font-size="16" font-weight="normal" fill="#e6ecf0" text-anchor="start" textLength="125.1" lengthAdjust="spacingAndGlyphs">CPUCreditBalance</text>
<path d="M1587 684.4H1603.3" stroke="#2fc6a2" stroke-width="2"/>
<text x="1608.6" y="690" font-size="16" font-weight="normal" fill="#e6ecf0" text-anchor="start" textLength="114.4" lengthAdjust="spacingAndGlyphs">CPUCreditUsage</text>
</g>
<rect x="1002.2" y="644.4000000000001" width="19.3" height="19" fill="none" stroke="#c5d0d8" stroke-width="1.4"/>
<path d="M1007.5 654.2L1010.5 658.7L1016.5 648.7" fill="none" stroke="#d5dfe6" stroke-width="1.3"/>
<rect x="1001.5" y="674.9" width="20.7" height="20.5" fill="#7386ea"/>
<path d="M1007.0 685.4L1010.5 690.9L1017.0 679.9" fill="none" stroke="#fff" stroke-width="2"/>
<rect x="1001.5" y="705.4" width="20.7" height="20.5" fill="#5fd9bd"/>
<path d="M1007.0 715.9L1010.5 721.4L1017.0 710.4" fill="none" stroke="#fff" stroke-width="2"/>
<text x="1026.3" y="660.7" font-size="18" font-weight="normal" fill="#d3dee5" text-anchor="start" textLength="101.29999999999995" lengthAdjust="spacingAndGlyphs">Metric Name</text>
<text x="1026.3" y="691.2" font-size="16" font-weight="normal" fill="#d3dee5" text-anchor="start" textLength="101.29999999999995" lengthAdjust="spacingAndGlyphs">CPUCreditB...</text>
<text x="1026.3" y="721.7" font-size="16" font-weight="normal" fill="#d3dee5" text-anchor="start" textLength="103.0" lengthAdjust="spacingAndGlyphs">CPUCreditU...</text>
<text x="1002.0" y="751.7" font-size="15" font-weight="normal" fill="#d3dee5" text-anchor="start" textLength="73.1" lengthAdjust="spacingAndGlyphs">+ 2 more...</text>
<rect x="1753.9" y="672.7" width="19.3" height="19" fill="none" stroke="#c5d0d8" stroke-width="1.4"/>
<path d="M1759.2 682.5L1762.2 687L1768.2 677" fill="none" stroke="#d5dfe6" stroke-width="1.3"/>
<rect x="1753.2" y="702.7" width="20.7" height="20.5" fill="#7386ea"/>
<path d="M1758.7 713.2L1762.2 718.7L1768.7 707.7" fill="none" stroke="#fff" stroke-width="2"/>
<rect x="1753.2" y="733.1" width="20.7" height="20.5" fill="#5fd9bd"/>
<path d="M1758.7 743.6L1762.2 749.1L1768.7 738.1" fill="none" stroke="#fff" stroke-width="2"/>
<text x="1778.3" y="688" font-size="18" font-weight="normal" fill="#d3dee5" text-anchor="start" textLength="100.70000000000005" lengthAdjust="spacingAndGlyphs">Metric Name</text>
<text x="1778.3" y="718.5" font-size="16" font-weight="normal" fill="#d3dee5" text-anchor="start" textLength="100.70000000000005" lengthAdjust="spacingAndGlyphs">CPUCreditB...</text>
<text x="1778.3" y="749" font-size="16" font-weight="normal" fill="#d3dee5" text-anchor="start" textLength="102.40000000000009" lengthAdjust="spacingAndGlyphs">CPUCreditU...</text>
</svg>

<div class="a t" style="left:17.0px;top:12.3px;font-size:18px;line-height:18px;font-weight:normal;color:#fff;letter-spacing:-0.21px;">Create</div>
<div class="a t" style="left:2.0px;top:99.3px;font-size:15px;line-height:15px;font-weight:normal;color:#c9cacf;letter-spacing:0.73px;-webkit-text-stroke:0.5px #c9cacf;">Explorer</div>
<div class="a t" style="left:-10.5px;top:187.8px;font-size:15px;line-height:15px;font-weight:normal;color:#c9cacf;letter-spacing:0.57px;-webkit-text-stroke:0.5px #c9cacf;">Dashboards</div>
<div class="a t" style="left:4.3px;top:277.0px;font-size:15px;line-height:15px;font-weight:normal;color:#c9cacf;letter-spacing:0.69px;-webkit-text-stroke:0.5px #c9cacf;">Reports</div>
<div class="a t" style="left:15.4px;top:365.7px;font-size:15px;line-height:15px;font-weight:normal;color:#c9cacf;letter-spacing:0.84px;-webkit-text-stroke:0.5px #c9cacf;">Data</div>
<div class="a t" style="left:5.6px;top:454.8px;font-size:15px;line-height:15px;font-weight:normal;color:#c9cacf;letter-spacing:0.55px;-webkit-text-stroke:0.5px #c9cacf;">Ask Zia</div>
<div class="a t" style="left:15.4px;top:558.6px;font-size:15px;line-height:15px;font-weight:normal;color:#c9cacf;letter-spacing:0.90px;-webkit-text-stroke:0.5px #c9cacf;">Data</div>
<div class="a t" style="left:4.1px;top:577.5px;font-size:15px;line-height:15px;font-weight:normal;color:#c9cacf;letter-spacing:0.34px;-webkit-text-stroke:0.5px #c9cacf;">Sources</div>
<div class="a t" style="left:12.7px;top:658.0px;font-size:15px;line-height:15px;font-weight:normal;color:#c9cacf;letter-spacing:1.70px;-webkit-text-stroke:0.5px #c9cacf;">More</div>
<div class="a t" style="left:6.8px;top:742.3px;font-size:15px;line-height:15px;font-weight:normal;color:#c9cacf;letter-spacing:1.12px;-webkit-text-stroke:0.5px #c9cacf;">Viewer</div>
<div class="a t" style="left:29.0px;top:722.7px;font-size:11px;line-height:11px;font-weight:normal;color:#b3b3b6;letter-spacing:1.50px;">OFF</div>
<div class="a t" style="left:96.5px;top:10.3px;font-size:18px;line-height:18px;font-weight:normal;color:#3a3a3a;letter-spacing:-0.31px;">Drag and Drop the Views</div>
<div class="a t" style="left:92.8px;top:59.8px;font-size:18px;line-height:18px;font-weight:normal;color:#8a8a8a;letter-spacing:-0.87px;">Search</div>
<div class="a t" style="left:155.5px;top:116.1px;font-size:18px;line-height:18px;font-weight:bold;color:#333;letter-spacing:-0.53px;">Metric Reports</div>
<div class="a t" style="left:155.3px;top:158.7px;font-size:18px;line-height:18px;font-weight:normal;color:#222;letter-spacing:-0.39px;">Application ELB Conn...</div>
<div class="a t" style="left:155.3px;top:202.6px;font-size:18px;line-height:18px;font-weight:normal;color:#222;letter-spacing:-0.26px;">DynamoDB Account-L...</div>
<div class="a t" style="left:155.3px;top:246.5px;font-size:18px;line-height:18px;font-weight:normal;color:#222;letter-spacing:-0.48px;">DynamoDB Table-Leve...</div>
<div class="a t" style="left:155.3px;top:290.4px;font-size:18px;line-height:18px;font-weight:normal;color:#222;letter-spacing:-0.57px;">EBS Volume Burst Bal...</div>
<div class="a t" style="left:155.3px;top:334.3px;font-size:18px;line-height:18px;font-weight:normal;color:#222;letter-spacing:-0.40px;">EBS Volume I/O Perfor...</div>
<div class="a t" style="left:155.3px;top:378.2px;font-size:18px;line-height:18px;font-weight:normal;color:#222;letter-spacing:-0.64px;">EBS Volume Stalled IO ...</div>
<div class="a t" style="left:155.3px;top:422.1px;font-size:18px;line-height:18px;font-weight:normal;color:#222;letter-spacing:-0.73px;">EC2 and EBS Disk I/O ...</div>
<div class="a t" style="left:155.3px;top:466.0px;font-size:18px;line-height:18px;font-weight:normal;color:#222;letter-spacing:-0.63px;">EC2 and EBS I/O Oper...</div>
<div class="a t" style="left:155.3px;top:509.9px;font-size:18px;line-height:18px;font-weight:normal;color:#222;letter-spacing:-0.30px;">EC2 CPU Credit Utiliz...</div>
<div class="a t" style="left:155.3px;top:553.8px;font-size:18px;line-height:18px;font-weight:normal;color:#222;letter-spacing:-0.30px;">EC2 CPU Utilization</div>
<div class="a t" style="left:155.3px;top:597.7px;font-size:18px;line-height:18px;font-weight:normal;color:#222;letter-spacing:-0.31px;">EC2 CPU Utilization M...</div>
<div class="a t" style="left:155.3px;top:641.6px;font-size:18px;line-height:18px;font-weight:normal;color:#222;letter-spacing:-0.08px;">EC2 Monthly Network...</div>
<div class="a t" style="left:155.3px;top:685.5px;font-size:18px;line-height:18px;font-weight:normal;color:#222;letter-spacing:-0.84px;">EFS Storage Bytes Rep...</div>
<div class="a t" style="left:155.3px;top:729.4px;font-size:18px;line-height:18px;font-weight:normal;color:#222;letter-spacing:-0.23px;">Lambda Throttling Insi...</div>
<div class="a t" style="left:155.3px;top:773.3px;font-size:18px;line-height:18px;font-weight:normal;color:#222;letter-spacing:-0.12px;">NAT Gateway Networ...</div>
<div class="a t" style="left:155.3px;top:817.2px;font-size:18px;line-height:18px;font-weight:normal;color:#222;letter-spacing:-0.46px;">RDS CPU Utilization</div>
<div class="a t" style="left:415.4px;top:24.0px;font-size:26px;line-height:26px;font-weight:normal;color:#1f2227;letter-spacing:0.04px;-webkit-text-stroke:0.55px #1f2227;">Cost and Resurce Optimization Dashboard</div>
<div class="a t" style="left:1550.0px;top:23.1px;font-size:18px;line-height:18px;font-weight:normal;color:#fff;letter-spacing:-0.00px;">View Mode</div>
<div class="a t" style="left:1699.0px;top:23.1px;font-size:18px;line-height:18px;font-weight:normal;color:#1f2227;letter-spacing:-0.60px;">Ask Zia</div>
<div class="a t" style="left:1790.0px;top:23.1px;font-size:18px;line-height:18px;font-weight:normal;color:#1f2227;letter-spacing:-0.87px;">Themes</div>
<div class="a t" style="left:442.8px;top:98.2px;font-size:19px;line-height:19px;font-weight:normal;color:#3b8de0;letter-spacing:-1.03px;">Add Tab</div>
<div class="a t" style="left:1453.0px;top:99.5px;font-size:18px;line-height:18px;font-weight:normal;color:#1f2227;letter-spacing:0.07px;">Widget</div>
<div class="a t" style="left:1573.5px;top:99.5px;font-size:18px;line-height:18px;font-weight:normal;color:#1f2227;letter-spacing:-0.34px;">Text</div>
<div class="a t" style="left:1669.0px;top:99.5px;font-size:18px;line-height:18px;font-weight:normal;color:#1f2227;letter-spacing:-0.96px;">Image</div>
<div class="a t" style="left:1779.3px;top:99.5px;font-size:18px;line-height:18px;font-weight:normal;color:#1f2227;letter-spacing:-1.04px;">Embed</div>
<div class="a t" style="left:1883.0px;top:100.5px;font-size:10px;line-height:10px;font-weight:normal;color:#c4c4c4;letter-spacing:1.00px;">OFF</div>
<div class="a t" style="left:1858.0px;top:119.1px;font-size:11.5px;line-height:11.5px;font-weight:bold;color:#333;letter-spacing:-0.69px;">Show Grid</div>
<div class="a t" style="left:435.8px;top:154.8px;font-size:21px;line-height:21px;font-weight:normal;color:#4aa0dc;letter-spacing:0.33px;-webkit-text-stroke:0.3px #4aa0dc;">User Filters</div>
<div class="a t" style="left:1691.3px;top:159.3px;font-size:17px;line-height:17px;font-weight:normal;color:#3c8ed2;letter-spacing:-0.25px;-webkit-text-stroke:0.3px #3c8ed2;">Auto Add User Filters</div>
<div class="a t" style="left:1862.5px;top:159.3px;font-size:15px;line-height:15px;font-weight:normal;color:#3c8ed2;letter-spacing:0.00px;">?</div>
<div class="a t" style="left:421.3px;top:200.8px;font-size:18px;line-height:18px;font-weight:normal;color:#bcd7ea;letter-spacing:-0.26px;">Date Time:</div>
<div class="a t" style="left:426.6px;top:228.8px;font-size:18px;line-height:18px;font-weight:normal;color:#459bd2;letter-spacing:-0.35px;">--- Select ---</div>
<div class="a t" style="left:438.4px;top:308.6px;font-size:18px;line-height:18px;font-weight:normal;color:#3b8de0;letter-spacing:-0.28px;">Add User Filters</div>
<div class="a t" style="left:497.0px;top:350.7px;font-size:19px;line-height:19px;font-weight:bold;color:#f4f6f8;letter-spacing:-0.73px;">Available File Systems</div>
<div class="a t" style="left:551.9px;top:387.0px;font-size:55.5px;line-height:55.5px;font-weight:bold;color:#ffffff;letter-spacing:0.00px;">1</div>
<div class="a t" style="left:547.3px;top:455.3px;font-size:18px;line-height:18px;font-weight:normal;color:#f0f3f6;letter-spacing:-0.23px;">Unknown: -</div>
<div class="a t" style="left:902.8px;top:350.7px;font-size:19px;line-height:19px;font-weight:bold;color:#f4f6f8;letter-spacing:-0.99px;">Load Balancers</div>
<div class="a t" style="left:927.2px;top:387.0px;font-size:55.5px;line-height:55.5px;font-weight:bold;color:#ffffff;letter-spacing:0.00px;">3</div>
<div class="a t" style="left:946.3px;top:455.3px;font-size:18px;line-height:18px;font-weight:normal;color:#f0f3f6;letter-spacing:-0.41px;">Q4: 1</div>
<div class="a t" style="left:1283.5px;top:350.7px;font-size:19px;line-height:19px;font-weight:bold;color:#f4f6f8;letter-spacing:-0.89px;">EC2 Instances</div>
<div class="a t" style="left:1292.4px;top:387.0px;font-size:55.5px;line-height:55.5px;font-weight:bold;color:#ffffff;letter-spacing:-7.63px;">15</div>
<div class="a t" style="left:1316.4px;top:455.3px;font-size:18px;line-height:18px;font-weight:normal;color:#f0f3f6;letter-spacing:-0.13px;">Q1: 61</div>
<div class="a t" style="left:1635.3px;top:350.7px;font-size:19px;line-height:19px;font-weight:bold;color:#f4f6f8;letter-spacing:-0.99px;">Avg Block Size (GiB)</div>
<div class="a t" style="left:1630.4px;top:387.0px;font-size:55.5px;line-height:55.5px;font-weight:bold;color:#ffffff;letter-spacing:-2.72px;">28.19</div>
<div class="a t" style="left:1680.2px;top:455.3px;font-size:18px;line-height:18px;font-weight:normal;color:#f0f3f6;letter-spacing:-0.11px;">Q1: 56.13</div>
<div class="a t" style="left:427.4px;top:512.9px;font-size:19px;line-height:19px;font-weight:bold;color:#ffffff;letter-spacing:-0.42px;">EC2 CPU Credit Utilization</div>
<div class="a t" style="left:1180.2px;top:512.9px;font-size:19px;line-height:19px;font-weight:bold;color:#ffffff;letter-spacing:-0.72px;">RDS Instance CPU Credit Trend</div>
<div class="a t" style="left:419.0px;top:562.6px;font-size:18px;line-height:18px;font-weight:normal;color:#a9cfe4;letter-spacing:-0.49px;">EC2 Instance ID:</div>
<div class="a t" style="left:425.0px;top:589.8px;font-size:18px;line-height:18px;font-weight:normal;color:#459bd2;letter-spacing:-0.42px;">--- Select ---</div>
<div class="a t" style="left:604.0px;top:562.6px;font-size:18px;line-height:18px;font-weight:normal;color:#a9cfe4;letter-spacing:-0.84px;">Region:</div>
<div class="a t" style="left:610.0px;top:589.8px;font-size:18px;line-height:18px;font-weight:normal;color:#459bd2;letter-spacing:-0.42px;">--- Select ---</div>
<div class="a t" style="left:789.0px;top:562.6px;font-size:18px;line-height:18px;font-weight:normal;color:#a9cfe4;letter-spacing:-0.52px;">Instance Type:</div>
<div class="a t" style="left:795.0px;top:589.8px;font-size:18px;line-height:18px;font-weight:normal;color:#459bd2;letter-spacing:-0.42px;">--- Select ---</div>
<div class="a t" style="left:1170.0px;top:562.6px;font-size:18px;line-height:18px;font-weight:normal;color:#a9cfe4;letter-spacing:0.03px;">DB Identifier:</div>
<div class="a t" style="left:1176.0px;top:589.8px;font-size:18px;line-height:18px;font-weight:normal;color:#459bd2;letter-spacing:-0.42px;">--- Select ---</div>
<div class="a t" style="left:1355.0px;top:562.6px;font-size:18px;line-height:18px;font-weight:normal;color:#a9cfe4;letter-spacing:-0.81px;">DB Class:</div>
<div class="a t" style="left:1361.0px;top:589.8px;font-size:18px;line-height:18px;font-weight:normal;color:#459bd2;letter-spacing:-0.42px;">--- Select ---</div>
<div class="a t" style="left:1540.0px;top:562.6px;font-size:18px;line-height:18px;font-weight:normal;color:#a9cfe4;letter-spacing:-0.68px;">Engine:</div>
<div class="a t" style="left:1546.0px;top:589.8px;font-size:18px;line-height:18px;font-weight:normal;color:#459bd2;letter-spacing:-0.42px;">--- Select ---</div>
<div class="a t" style="left:1165.3px;top:639.3px;font-size:16px;line-height:16px;font-weight:normal;color:#3b87e0;letter-spacing:0.13px;-webkit-text-stroke:0.2px #3b87e0;">Show more filters</div>
</body></html>
